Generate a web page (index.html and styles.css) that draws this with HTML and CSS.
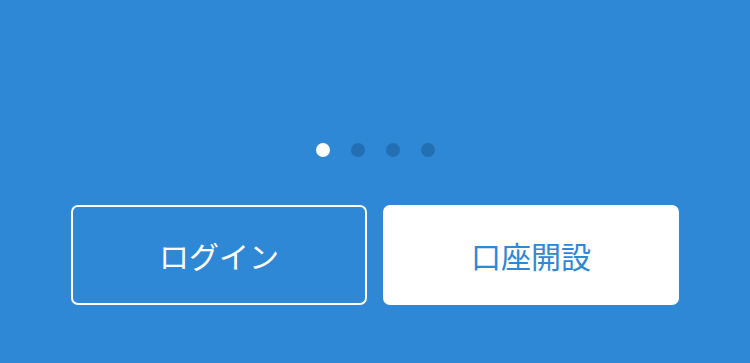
FILE: index.html
```html
<!DOCTYPE html>
<html lang="ja">
<head>
<meta charset="utf-8">
<link rel="stylesheet" href="styles.css">
</head>
<body>
<div class="screen">
  <div class="dots">
    <span class="dot active"></span>
    <span class="dot"></span>
    <span class="dot"></span>
    <span class="dot"></span>
  </div>
  <div class="actions">
    <button class="btn btn-outline">ログイン</button>
    <button class="btn btn-solid">口座開設</button>
  </div>
</div>
</body>
</html>
```
FILE: styles.css
```css
html, body {
  margin: 0;
  padding: 0;
}
body {
  background: #2e88d5;
  font-family: "Noto Sans CJK JP", "Noto Sans", sans-serif;
}
.screen {
  width: 750px;
  height: 363px;
  display: flex;
  flex-direction: column;
  align-items: center;
  padding-top: 143px;
  box-sizing: border-box;
}
.dots {
  display: flex;
  gap: 21px;
  height: 14px;
  margin-left: 0;
}
.dot {
  width: 14px;
  height: 14px;
  border-radius: 50%;
  background: #236fb3;
}
.dot.active {
  background: #ffffff;
}
.actions {
  margin-top: 48px;
  display: flex;
  gap: 16px;
}
.btn {
  width: 296px;
  height: 100px;
  border-radius: 7px;
  font-family: "Noto Sans CJK JP", "Noto Sans", sans-serif;
  font-size: 30px;
  font-weight: 400;
  padding: 0;
  margin: 0;
  box-sizing: border-box;
  display: flex;
  align-items: center;
  justify-content: center;
  letter-spacing: 0;
}
.btn-outline {
  background: transparent;
  border: 2px solid #ffffff;
  color: #ffffff;
}
.btn-solid {
  background: #ffffff;
  border: none;
  color: #2e88d5;
}
```
